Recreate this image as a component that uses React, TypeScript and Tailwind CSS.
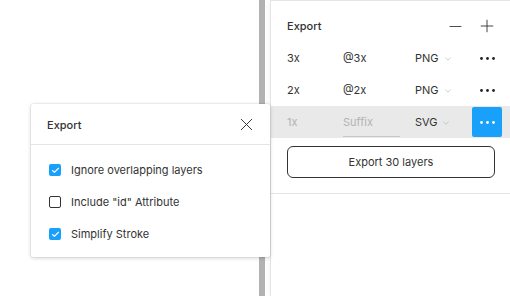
import { X, Minus, Plus, ChevronDown, Check } from 'lucide-react'

interface ExportRow {
  scale: string
  suffix: string
  format: string
  active?: boolean
}

const rows: ExportRow[] = [
  { scale: '3x', suffix: '@3x', format: 'PNG' },
  { scale: '2x', suffix: '@2x', format: 'PNG' },
  { scale: '1x', suffix: '', format: 'SVG', active: true },
]

const options = [
  { label: 'Ignore overlapping layers', checked: true },
  { label: 'Include "id" Attribute', checked: false },
  { label: 'Simplify Stroke', checked: true },
]

function Dots({ light }: { light?: boolean }) {
  return (
    <svg width="15" height="3" viewBox="0 0 15 3">
      <circle cx="1.5" cy="1.5" r="1.4" fill={light ? '#fff' : '#222'} />
      <circle cx="7.5" cy="1.5" r="1.4" fill={light ? '#fff' : '#222'} />
      <circle cx="13.5" cy="1.5" r="1.4" fill={light ? '#fff' : '#222'} />
    </svg>
  )
}

export default function App() {
  return (
    <div className="relative flex h-[296px] w-[510px] overflow-hidden bg-white text-[11px] text-[#333] [font-family:Inter,'Noto_Sans',sans-serif]">
      {/* Canvas */}
      <div className="w-[259px]" />
      <div className="w-[6px] bg-[#b2b2b2]" />
      <div className="w-[5px]" />

      {/* Properties panel */}
      <div className="flex w-[240px] flex-col border-l border-t border-[#e5e5e5] shadow-[-2px_0_6px_rgba(0,0,0,0.04)]">
        <div className="border-b border-[#e5e5e5] pt-[9px] pb-[15px]">
          <div className="flex h-8 items-center pl-[16px] pr-[8px]">
            <span className="flex-1 pt-[1px] font-medium">Export</span>
            <button className="flex h-[30px] w-[30px] items-center justify-center">
              <Minus className="h-[19px] w-[19px]" strokeWidth={1.1} />
            </button>
            <button className="ml-[2px] flex h-[30px] w-[30px] items-center justify-center">
              <Plus className="h-[20px] w-[20px]" strokeWidth={1.1} />
            </button>
          </div>

          {rows.map(row => (
            <div
              key={row.scale}
              className={`flex h-8 items-center pl-[16px] pr-[8px] ${row.active ? 'bg-[#e9e9e9]' : ''}`}
            >
              <span className={`w-[56px] pt-[1px] ${row.active ? 'text-[#b3b3b3]' : ''}`}>{row.scale}</span>
              {row.suffix ? (
                <span className="w-[72px] pt-[1px]">{row.suffix}</span>
              ) : (
                <div className="w-[72px]">
                  <div className="w-[57px] border-b border-[#c7c7c7] pb-[5px] pt-[7px] text-[#b3b3b3]">Suffix</div>
                </div>
              )}
              <span className="flex flex-1 items-center gap-[4px] pt-[1px]">
                {row.format}
                <ChevronDown className="h-[10px] w-[10px] text-[#aaa]" strokeWidth={1.4} />
              </span>
              <button
                className={`flex h-[30px] w-[30px] items-center justify-center rounded-[2px] ${
                  row.active ? 'bg-[#18a0fb]' : ''
                }`}
              >
                <Dots light={row.active} />
              </button>
            </div>
          ))}

          <div className="pl-[16px] pr-[15px] pt-2">
            <button className="flex h-[32px] w-full items-center justify-center rounded-[6px] border border-[#333] pt-[1px]">
              Export 30 layers
            </button>
          </div>
        </div>
      </div>

      {/* Export settings popover */}
      <div className="absolute left-[31px] top-[104px] w-[239px] rounded-[2px] bg-white shadow-[0_1px_4px_rgba(0,0,0,0.18),0_0_0_0.5px_rgba(0,0,0,0.08)]">
        <div className="flex h-[41px] items-center border-b border-[#e5e5e5] pl-[16px] pr-[13px]">
          <span className="flex-1 pt-[3px] font-medium">Export</span>
          <X className="h-[21px] w-[21px]" strokeWidth={1.1} />
        </div>
        <div className="pb-[7px] pt-[9px]">
          {options.map(opt => (
            <div key={opt.label} className="flex h-8 items-center pl-[18px]">
              {opt.checked ? (
                <span className="flex h-[12px] w-[12px] items-center justify-center rounded-[2px] bg-[#18a0fb]">
                  <Check className="h-[9px] w-[9px] text-white" strokeWidth={3} />
                </span>
              ) : (
                <span className="h-[12px] w-[12px] rounded-[2px] border border-[#333]" />
              )}
              <span className="ml-[10px] pt-[1px]">{opt.label}</span>
            </div>
          ))}
        </div>
      </div>
    </div>
  )
}
